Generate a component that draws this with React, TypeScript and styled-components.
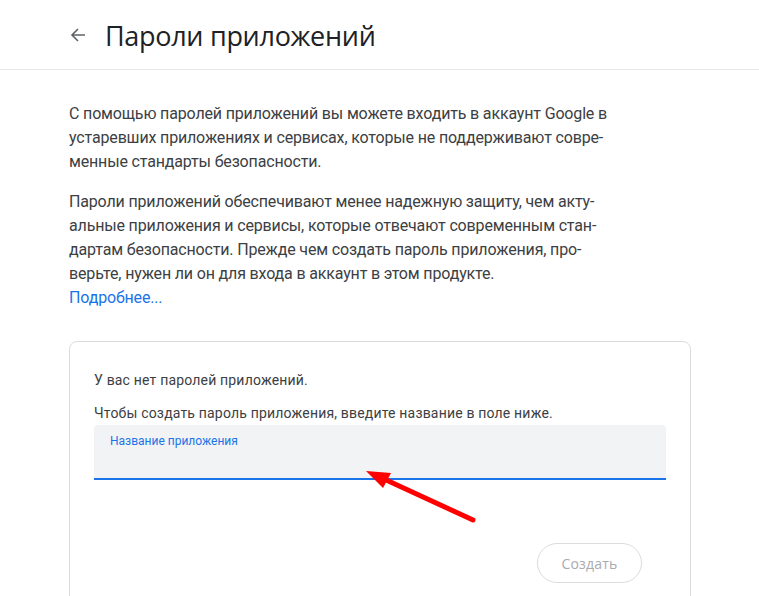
import styled, {createGlobalStyle} from "styled-components";

const GlobalStyle = createGlobalStyle`
    body {
        margin: 0;
        background: #ffffff;
        font-family: Roboto, "Noto Sans", Arial, sans-serif;
        color: #3c4043;
    }
`

const Page = styled.div`
    position: relative;
    width: 759px;
    height: 596px;
    overflow: hidden;
`

const Header = styled.header`
    display: flex;
    align-items: center;
    gap: 15px;
    height: 69px;
    padding-left: 66px;
    border-bottom: 1px solid #e8e8e8;
    box-sizing: content-box;
`

const BackButton = styled.span`
    display: flex;
    width: 24px;
    height: 24px;
    align-items: center;
    justify-content: center;
    color: #5f6368;
`

const Title = styled.h1`
    margin: 0;
    padding-top: 2px;
    font-family: "Open Sans", Roboto, sans-serif;
    font-size: 27px;
    font-weight: 400;
    color: #202124;
    letter-spacing: -0.3px;
`

const Content = styled.main`
    padding: 32px 68px 0 69px;
`

const Paragraph = styled.p`
    margin: 0 0 16px;
    font-size: 16px;
    line-height: 24px;
    letter-spacing: -0.16px;
    color: #3c4043;
    white-space: nowrap;
`

const MoreLink = styled.a`
    color: #1a73e8;
    text-decoration: none;
`

const Card = styled.section`
    margin-top: 31px;
    border: 1px solid #dadce0;
    border-radius: 8px;
    padding: 28px 24px 0;
    height: 300px;
`

const CardText = styled.p<{ $gap?: number }>`
    margin: 0 0 ${p => p.$gap ?? 0}px;
    font-size: 14px;
    line-height: 20px;
    letter-spacing: 0.18px;
    color: #3c4043;
`

const Field = styled.div`
    box-sizing: border-box;
    margin-top: 2px;
    height: 55px;
    padding: 5px 16px 0;
    background: #f1f3f4;
    border-radius: 4px 4px 0 0;
    border-bottom: 2px solid #1a73e8;
`

const FieldLabel = styled.span`
    font-size: 12px;
    line-height: 16px;
    color: #1a73e8;
`

const Actions = styled.div`
    display: flex;
    justify-content: flex-end;
    padding: 63px 24px 0 0;
`

const CreateButton = styled.button`
    width: 105px;
    height: 40px;
    border: 1px solid #dadce0;
    border-radius: 20px;
    background: #ffffff;
    color: #a8abaf;
    font-family: "Open Sans", Roboto, sans-serif;
    font-size: 14px;
    letter-spacing: 0.2px;
`

const Pointer = styled.svg`
    position: absolute;
    left: 0;
    top: 0;
    pointer-events: none;
`

function App() {
    return (
        <>
            <GlobalStyle/>
            <Page>
                <Header>
                    <BackButton>
                        <svg width="16" height="16" viewBox="0 0 16 16">
                            <path d="M15 8H2.5M8 2L2 8l6 6" fill="none" stroke="currentColor" strokeWidth="1.6"/>
                        </svg>
                    </BackButton>
                    <Title>Пароли приложений</Title>
                </Header>
                <Content>
                    <Paragraph>
                        С помощью паролей приложений вы можете входить в аккаунт Google в<br/>
                        устаревших приложениях и сервисах, которые не поддерживают совре-<br/>
                        менные стандарты безопасности.
                    </Paragraph>
                    <Paragraph>
                        Пароли приложений обеспечивают менее надежную защиту, чем акту-<br/>
                        альные приложения и сервисы, которые отвечают современным стан-<br/>
                        дартам безопасности. Прежде чем создать пароль приложения, про-<br/>
                        верьте, нужен ли он для входа в аккаунт в этом продукте.<br/>
                        <MoreLink href="#">Подробнее...</MoreLink>
                    </Paragraph>
                    <Card>
                        <CardText $gap={13}>У вас нет паролей приложений.</CardText>
                        <CardText>Чтобы создать пароль приложения, введите название в поле ниже.</CardText>
                        <Field>
                            <FieldLabel>Название приложения</FieldLabel>
                        </Field>
                        <Actions>
                            <CreateButton disabled>Создать</CreateButton>
                        </Actions>
                    </Card>
                </Content>
                <Pointer width="759" height="596" viewBox="0 0 759 596">
                    <line x1="473" y1="520" x2="384" y2="479" stroke="#ff0000" strokeWidth="5" strokeLinecap="round"/>
                    <polygon points="366,471 383,488 391,473" fill="#ff0000"/>
                </Pointer>
            </Page>
        </>
    )
}

export default App;
